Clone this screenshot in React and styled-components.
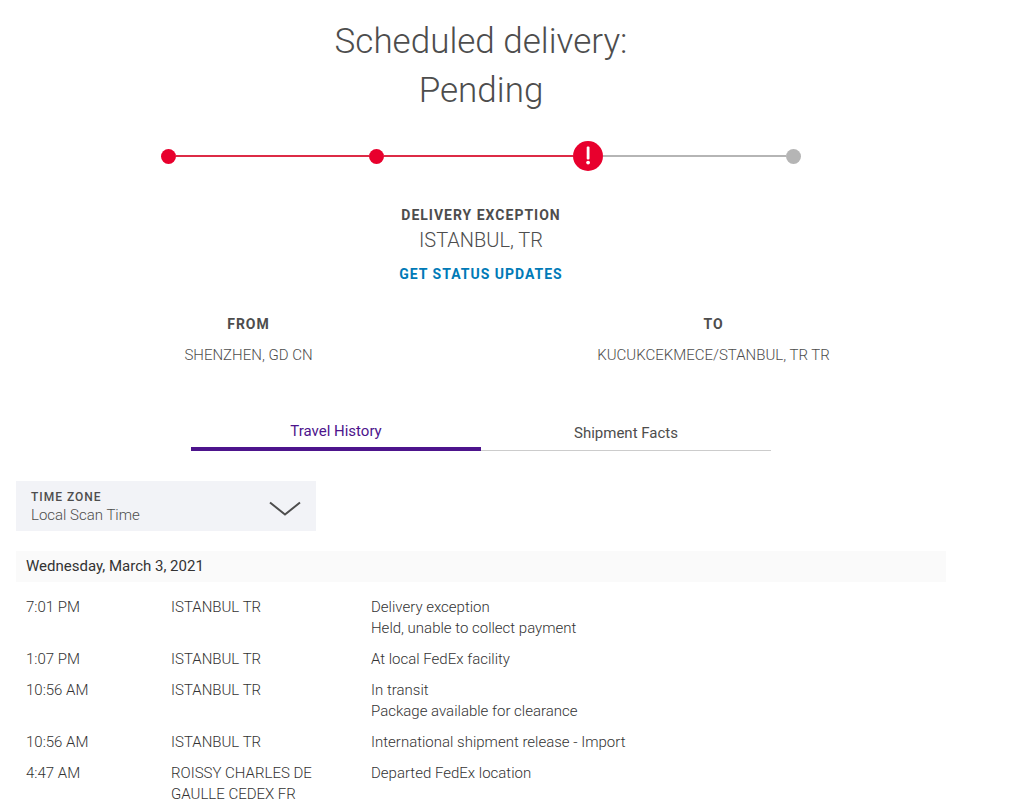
import React, { useState } from "react";
import styled, { createGlobalStyle } from "styled-components";

const steps = [
  { id: "picked-up", status: "done", length: 193 },
  { id: "in-transit", status: "done", length: 188 },
  { id: "exception", status: "alert", length: 183 },
  { id: "delivered", status: "pending" },
];

const scans = [
  {
    time: "7:01 PM",
    location: "ISTANBUL TR",
    event: "Delivery exception",
    detail: "Held, unable to collect payment",
  },
  { time: "1:07 PM", location: "ISTANBUL TR", event: "At local FedEx facility" },
  {
    time: "10:56 AM",
    location: "ISTANBUL TR",
    event: "In transit",
    detail: "Package available for clearance",
  },
  {
    time: "10:56 AM",
    location: "ISTANBUL TR",
    event: "International shipment release - Import",
  },
  {
    time: "4:47 AM",
    location: "ROISSY CHARLES DE GAULLE CEDEX FR",
    event: "Departed FedEx location",
  },
];

export default function App() {
  const [tab, setTab] = useState("history");
  const [timeZone, setTimeZone] = useState("local");

  return (
    <>
      <GlobalStyle />
      <Page>
        <Title>
          Scheduled delivery:
          <br />
          Pending
        </Title>

        <Track>
          {steps.map((step) => (
            <React.Fragment key={step.id}>
              <Dot $status={step.status}>
                {step.status === "alert" && (
                  <svg width="30" height="30" viewBox="0 0 30 30" aria-hidden="true">
                    <rect x="13.7" y="5.5" width="2.8" height="13" rx="1" fill="#fff" />
                    <circle cx="15.1" cy="21.6" r="1.9" fill="#fff" />
                  </svg>
                )}
              </Dot>
              {step.length && <Line $status={step.status} $length={step.length} />}
            </React.Fragment>
          ))}
        </Track>

        <Status>
          <Caption>DELIVERY EXCEPTION</Caption>
          <City>ISTANBUL, TR</City>
          <UpdatesLink href="#updates">GET STATUS UPDATES</UpdatesLink>
        </Status>

        <Route>
          <Place>
            <Caption>FROM</Caption>
            <PlaceName>SHENZHEN, GD CN</PlaceName>
          </Place>
          <Place>
            <Caption>TO</Caption>
            <PlaceName>KUCUKCEKMECE/STANBUL, TR TR</PlaceName>
          </Place>
        </Route>

        <Tabs role="tablist">
          <Tab
            type="button"
            role="tab"
            aria-selected={tab === "history"}
            $active={tab === "history"}
            onClick={() => setTab("history")}
          >
            Travel History
          </Tab>
          <Tab
            type="button"
            role="tab"
            aria-selected={tab === "facts"}
            $active={tab === "facts"}
            onClick={() => setTab("facts")}
          >
            Shipment Facts
          </Tab>
        </Tabs>

        <Field>
          <Label htmlFor="timezone">TIME ZONE</Label>
          <Select
            id="timezone"
            value={timeZone}
            onChange={(e) => setTimeZone(e.target.value)}
          >
            <option value="local">Local Scan Time</option>
            <option value="utc">UTC</option>
          </Select>
          <Chevron width="32" height="16" viewBox="0 0 32 16" aria-hidden="true">
            <path d="M1 1.5 L16 13.5 L31 1.5" fill="none" stroke="#4d4d4d" strokeWidth="2" />
          </Chevron>
        </Field>

        <DateHeading>Wednesday, March 3, 2021</DateHeading>
        <Table>
          <colgroup>
            <col width="155" />
            <col width="200" />
            <col />
          </colgroup>
          <tbody>
            {scans.map((scan, i) => (
              <tr key={i}>
                <Cell>{scan.time}</Cell>
                <Cell>{scan.location}</Cell>
                <Cell>
                  {scan.event}
                  {scan.detail && <div>{scan.detail}</div>}
                </Cell>
              </tr>
            ))}
          </tbody>
        </Table>
      </Page>
    </>
  );
}

const GlobalStyle = createGlobalStyle`
  * {
    box-sizing: border-box;
  }
  body {
    margin: 0;
    background: #fff;
    color: #4d4d4d;
    font-family: Roboto, "Liberation Sans", sans-serif;
    font-size: 15px;
    font-weight: 300;
  }
`;

const statusColor = ({ $status }) => ($status === "pending" ? "#b5b5b5" : "#e8002d");

const Page = styled.main`
  padding: 17px 65px 0 16px;
`;

const Title = styled.h1`
  margin: 0;
  font-size: 35px;
  font-weight: 300;
  line-height: 49px;
  text-align: center;
`;

const Track = styled.div`
  display: flex;
  align-items: center;
  max-width: 640px;
  margin: 26px auto 0;
`;

const Dot = styled.span`
  display: block;
  flex: none;
  width: ${({ $status }) => ($status === "alert" ? "30px" : "15px")};
  height: ${({ $status }) => ($status === "alert" ? "30px" : "15px")};
  border-radius: 50%;
  background: ${statusColor};
  svg {
    display: block;
  }
`;

const Line = styled.span`
  flex: ${({ $length }) => $length} 1 0;
  height: 2px;
  background: ${({ $status }) => ($status === "done" ? "#dd2b46" : "#b5b5b5")};
`;

const Status = styled.div`
  display: flex;
  flex-direction: column;
  align-items: center;
  margin-top: 34px;
`;

const Caption = styled.div`
  font-size: 14px;
  font-weight: 700;
  line-height: 20px;
  letter-spacing: 1px;
`;

const City = styled.div`
  margin-top: 1px;
  font-size: 20px;
  line-height: 28px;
`;

const UpdatesLink = styled.a`
  margin-top: 10px;
  color: #007ab7;
  font-size: 14px;
  font-weight: 700;
  line-height: 20px;
  letter-spacing: 1px;
  text-decoration: none;
`;

const Route = styled.div`
  display: grid;
  grid-template-columns: 1fr 1fr;
  margin-top: 30px;
  text-align: center;
`;

const Place = styled.div`
  display: flex;
  flex-direction: column;
  gap: 11px;
`;

const PlaceName = styled.div`
  line-height: 21px;
`;

const Tabs = styled.div`
  display: flex;
  max-width: 580px;
  margin: 45px auto 0;
`;

const Tab = styled.button`
  flex: 1;
  height: 40px;
  padding: 4px 0 0;
  border: none;
  border-bottom: ${({ $active }) => ($active ? "4px solid #4d148c" : "1px solid #ccc")};
  background: none;
  color: ${({ $active }) => ($active ? "#4d148c" : "#4d4d4d")};
  font-family: inherit;
  font-size: 15px;
  font-weight: 400;
  cursor: pointer;
`;

const Field = styled.div`
  position: relative;
  display: flex;
  flex-direction: column;
  max-width: 300px;
  margin-top: 30px;
  padding: 8px 15px 6px;
  background: #f2f3f7;
`;

const Label = styled.label`
  font-size: 12px;
  font-weight: 500;
  line-height: 16px;
  letter-spacing: 1px;
`;

const Select = styled.select`
  appearance: none;
  height: 20px;
  padding: 0;
  border: none;
  background: none;
  color: inherit;
  font-family: inherit;
  font-size: 15px;
  font-weight: 300;
  cursor: pointer;
`;

const Chevron = styled.svg`
  position: absolute;
  top: 20px;
  right: 15px;
  pointer-events: none;
`;

const DateHeading = styled.h2`
  margin: 20px 0 10px;
  padding: 5px 10px;
  background: #fafafa;
  color: #333;
  font-size: 15px;
  font-weight: 400;
  line-height: 21px;
`;

const Table = styled.table`
  width: 100%;
  border-collapse: collapse;
  table-layout: fixed;
  color: #333;
`;

const Cell = styled.td`
  padding: 5px 20px 5px 0;
  line-height: 21px;
  vertical-align: top;
  &:first-child {
    padding-left: 10px;
  }
`;
